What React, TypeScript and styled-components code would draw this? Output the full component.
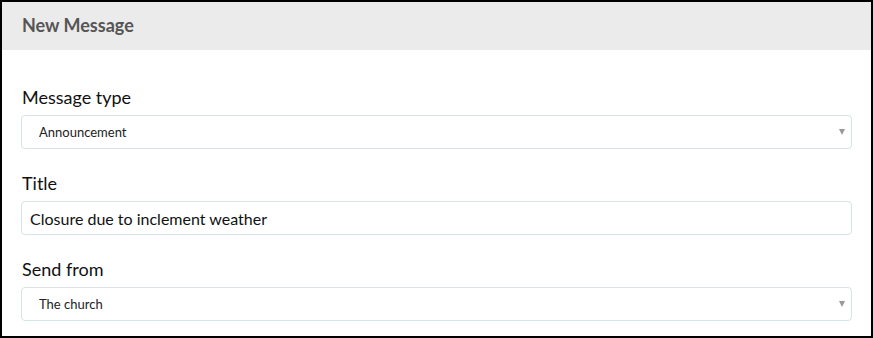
import styled, { createGlobalStyle } from 'styled-components';

const GlobalStyle = createGlobalStyle`
  html, body {
    margin: 0;
    padding: 0;
    background: #fff;
  }
  body {
    font-family: Lato, "Liberation Sans", sans-serif;
  }
  * {
    box-sizing: border-box;
  }
`;

const Panel = styled.div`
  width: 873px;
  height: 338px;
  border: 2px solid #000;
  background: #fff;
  overflow: hidden;
`;

const Header = styled.div`
  height: 48px;
  padding: 12px 20px 0;
  background: #ebebeb;
  h2 {
    margin: 0;
    font-size: 18px;
    line-height: 22px;
    font-weight: 700;
    color: #555;
  }
`;

const Body = styled.div`
  padding: 35px 19px 15px;
  display: flex;
  flex-direction: column;
  gap: 22px;
`;

const Field = styled.div`
  display: flex;
  flex-direction: column;
  gap: 7px;
`;

const Label = styled.label`
  font-size: 18px;
  line-height: 22px;
  padding: 1px 0 0 1px;
  color: #111;
`;

const Box = styled.div<{ $select?: boolean }>`
  position: relative;
  height: 34px;
  border: 1px solid #d5e4e4;
  border-radius: 4px;
  display: flex;
  align-items: center;
  padding-left: ${(p) => (p.$select ? '17px' : '8px')};
  font-size: ${(p) => (p.$select ? '13px' : '16px')};
  color: ${(p) => (p.$select ? '#222' : '#111')};
`;

const Arrow = styled.span`
  position: absolute;
  right: 6px;
  top: 13px;
  width: 0;
  height: 0;
  border-left: 3.5px solid transparent;
  border-right: 3.5px solid transparent;
  border-top: 6px solid #999;
`;

const SelectBox = ({ value }: { value: string }) => (
  <Box $select>
    {value}
    <Arrow />
  </Box>
);

const App = () => {
  return (
    <>
      <GlobalStyle />
      <Panel>
        <Header>
          <h2>New Message</h2>
        </Header>
        <Body>
          <Field>
            <Label>Message type</Label>
            <SelectBox value="Announcement" />
          </Field>
          <Field>
            <Label>Title</Label>
            <Box>Closure due to inclement weather</Box>
          </Field>
          <Field>
            <Label>Send from</Label>
            <SelectBox value="The church" />
          </Field>
        </Body>
      </Panel>
    </>
  );
};

export default App;
